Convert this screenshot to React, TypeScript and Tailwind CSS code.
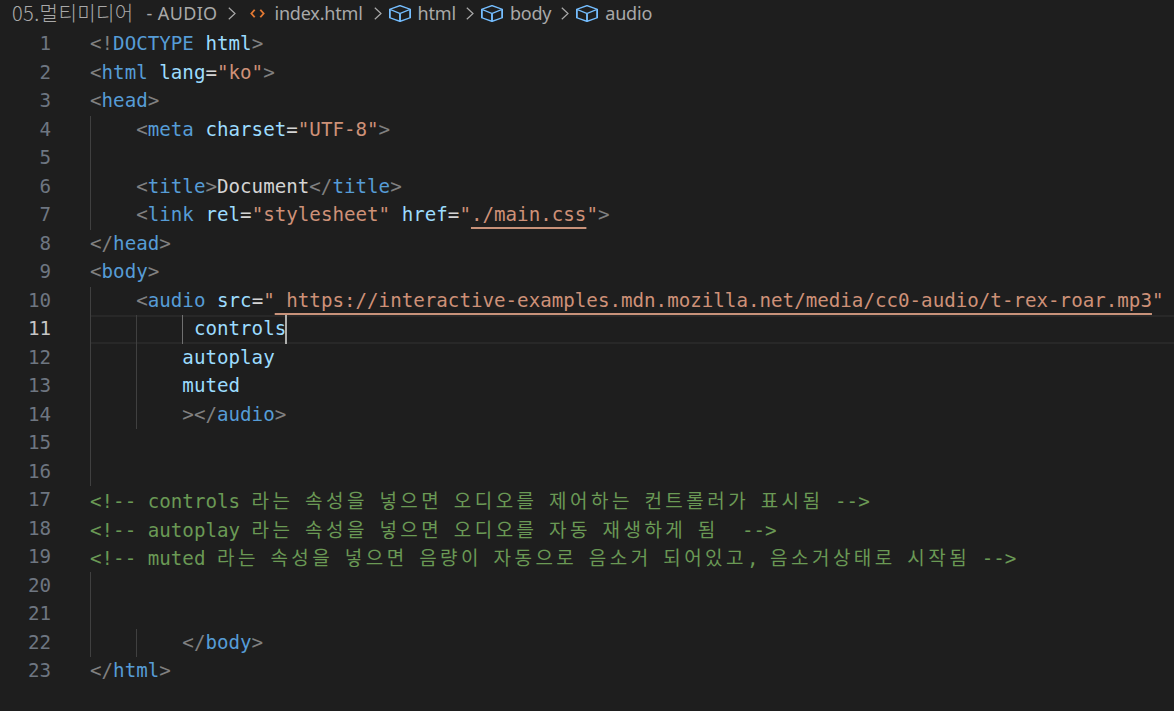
import type { ReactNode } from "react";

const BK = "text-[#808080]";
const TAG = "text-[#569cd6]";
const ATTR = "text-[#9cdcfe]";
const STR = "text-[#ce9178]";
const LINK = "underline decoration-2 underline-offset-[6px] decoration-[#c8927a] [text-decoration-skip-ink:none]";

function Cube() {
  return (
    <svg viewBox="1.5 0.7 13 14.6" preserveAspectRatio="none" className="h-[17px] w-[22px] shrink-0" fill="none" stroke="#75beff" strokeWidth="1.1" strokeLinejoin="round">
      <path d="M8 1.2 14 4.4v7.2L8 14.8 2 11.6V4.4z" />
      <path d="M2.2 4.6 8 8l5.8-3.4M8 8v6.6" />
    </svg>
  );
}

function Crumb({ children }: { children: ReactNode }) {
  return <span className="flex items-center gap-[7px]">{children}</span>;
}

function Sep({ className }: { className: string }) {
  return (
    <svg viewBox="0 0 8 13" className={`h-[13px] w-[8px] shrink-0 ${className}`} fill="none" stroke="#a9a9a9" strokeWidth="1.2">
      <path d="M.8.8 7 6.5.8 12.2" />
    </svg>
  );
}

function Comment({ text }: { text: string }) {
  const parts = text.split(/([\uac00-\ud7a3]+)/);
  return (
    <span className="text-[#6a9955]">
      {parts.map((p, i) =>
        /[\uac00-\ud7a3]/.test(p) ? (
          <span key={i} className="font-['Noto_Sans_CJK_KR',sans-serif] text-[19px] tracking-[3.46px]">
            {p}
          </span>
        ) : (
          <span key={i}>{p}</span>
        )
      )}
    </span>
  );
}

const LINES: { code?: ReactNode; guides?: number[]; active?: boolean }[] = [
  { code: <><span className={BK}>&lt;!</span><span className={TAG}>DOCTYPE</span> <span className={ATTR}>html</span><span className={BK}>&gt;</span></> },
  { code: <><span className={BK}>&lt;</span><span className={TAG}>html</span> <span className={ATTR}>lang</span><span className="text-[#d4d4d4]">=</span><span className={STR}>"ko"</span><span className={BK}>&gt;</span></> },
  { code: <><span className={BK}>&lt;</span><span className={TAG}>head</span><span className={BK}>&gt;</span></> },
  { guides: [0], code: <>    <span className={BK}>&lt;</span><span className={TAG}>meta</span> <span className={ATTR}>charset</span><span className="text-[#d4d4d4]">=</span><span className={STR}>"UTF-8"</span><span className={BK}>&gt;</span></> },
  { guides: [0] },
  { guides: [0], code: <>    <span className={BK}>&lt;</span><span className={TAG}>title</span><span className={BK}>&gt;</span><span className="text-[#d4d4d4]">Document</span><span className={BK}>&lt;/</span><span className={TAG}>title</span><span className={BK}>&gt;</span></> },
  { guides: [0], code: <>    <span className={BK}>&lt;</span><span className={TAG}>link</span> <span className={ATTR}>rel</span><span className="text-[#d4d4d4]">=</span><span className={STR}>"stylesheet"</span> <span className={ATTR}>href</span><span className="text-[#d4d4d4]">=</span><span className={STR}>"<span className={LINK}>./main.css</span>"</span><span className={BK}>&gt;</span></> },
  { code: <><span className={BK}>&lt;/</span><span className={TAG}>head</span><span className={BK}>&gt;</span></> },
  { code: <><span className={BK}>&lt;</span><span className={TAG}>body</span><span className={BK}>&gt;</span></> },
  { guides: [0], code: <>    <span className={BK}>&lt;</span><span className={TAG}>audio</span> <span className={ATTR}>src</span><span className="text-[#d4d4d4]">=</span><span className={STR}>"<span className={LINK}> https://interactive-examples.mdn.mozilla.net/media/cc0-audio/t-rex-roar.mp3</span>"</span></> },
  { guides: [0, 1, 2], active: true, code: <>         <span className={ATTR}>controls</span></> },
  { guides: [0, 1], code: <>        <span className={ATTR}>autoplay</span></> },
  { guides: [0, 1], code: <>        <span className={ATTR}>muted</span></> },
  { guides: [0, 1], code: <>        <span className={BK}>&gt;&lt;/</span><span className={TAG}>audio</span><span className={BK}>&gt;</span></> },
  { guides: [0] },
  { guides: [0] },
  { code: <Comment text="<!-- controls 라는 속성을 넣으면 오디오를 제어하는 컨트롤러가 표시됨 -->" /> },
  { code: <Comment text="<!-- autoplay 라는 속성을 넣으면 오디오를 자동 재생하게 됨  -->" /> },
  { code: <Comment text="<!-- muted 라는 속성을 넣으면 음량이 자동으로 음소거 되어있고, 음소거상태로 시작됨 -->" /> },
  { guides: [0] },
  { guides: [0] },
  { guides: [0, 1], code: <>        <span className={BK}>&lt;/</span><span className={TAG}>body</span><span className={BK}>&gt;</span></> },
  { code: <><span className={BK}>&lt;/</span><span className={TAG}>html</span><span className={BK}>&gt;</span></> },
];

const GUIDE_X = ["left-0", "left-[46px]", "left-[92px]"];

export default function App() {
  return (
    <div className="h-[711px] w-[1174px] overflow-hidden bg-[#1e1e1e]">
      {/* Breadcrumbs */}
      <div className="flex h-[30px] items-center whitespace-pre pb-[4px] pl-3 font-['Noto_Sans','Noto_Sans_CJK_KR',sans-serif] text-[18px] leading-[24px] tracking-[-0.2px] text-[#a9a9a9]">
        <span className="font-['Noto_Sans_CJK_KR',sans-serif] text-[20px] font-light leading-[24px] tracking-[0.4px]">05.멀티미디어</span>
        <span className="ml-[13px] tracking-[0.35px]">- AUDIO</span>
        <Sep className="ml-[10px] mr-[14px]" />
        <svg viewBox="0 0 16 10" className="mr-[10px] h-[11px] w-[15px] shrink-0" fill="none" stroke="#e37933" strokeWidth="2">
          <path d="M5 1 1.5 5 5 9M11 1l3.5 4L11 9" />
        </svg>
        <span>index.html</span>
        <Sep className="ml-[11px] mr-[7px]" />
        <Crumb><Cube />html</Crumb>
        <Sep className="ml-[10px] mr-[7px]" />
        <Crumb><Cube />body</Crumb>
        <Sep className="ml-[10px] mr-[7px]" />
        <Crumb><Cube />audio</Crumb>
      </div>

      {/* Editor */}
      <div className="font-['DejaVu_Sans_Mono',monospace] text-[19.186px] leading-[28.5px]">
        {LINES.map((line, i) => (
          <div key={i} className="flex h-[28.5px]">
            <div className={`w-[51px] shrink-0 text-right ${line.active ? "text-[#c6c6c6]" : "text-[#6e7681]"}`}>
              {i + 1}
            </div>
            <div className={`relative ml-[39px] grow whitespace-pre ${line.active ? "border-y-2 border-[#282828] leading-[24.5px]" : ""}`}>
              {line.guides?.map((g) => (
                <span
                  key={g}
                  className={`absolute w-px ${GUIDE_X[g]} ${line.active ? "-inset-y-[2px]" : "inset-y-0"} ${line.active && g === 2 ? "bg-[#707070]" : "bg-[#404040]"}`}
                />
              ))}
              {line.code}
              {line.active && <span className="absolute -inset-y-[2px] left-[195px] w-[2px] bg-[#aeafad]" />}
            </div>
          </div>
        ))}
      </div>
    </div>
  );
}
